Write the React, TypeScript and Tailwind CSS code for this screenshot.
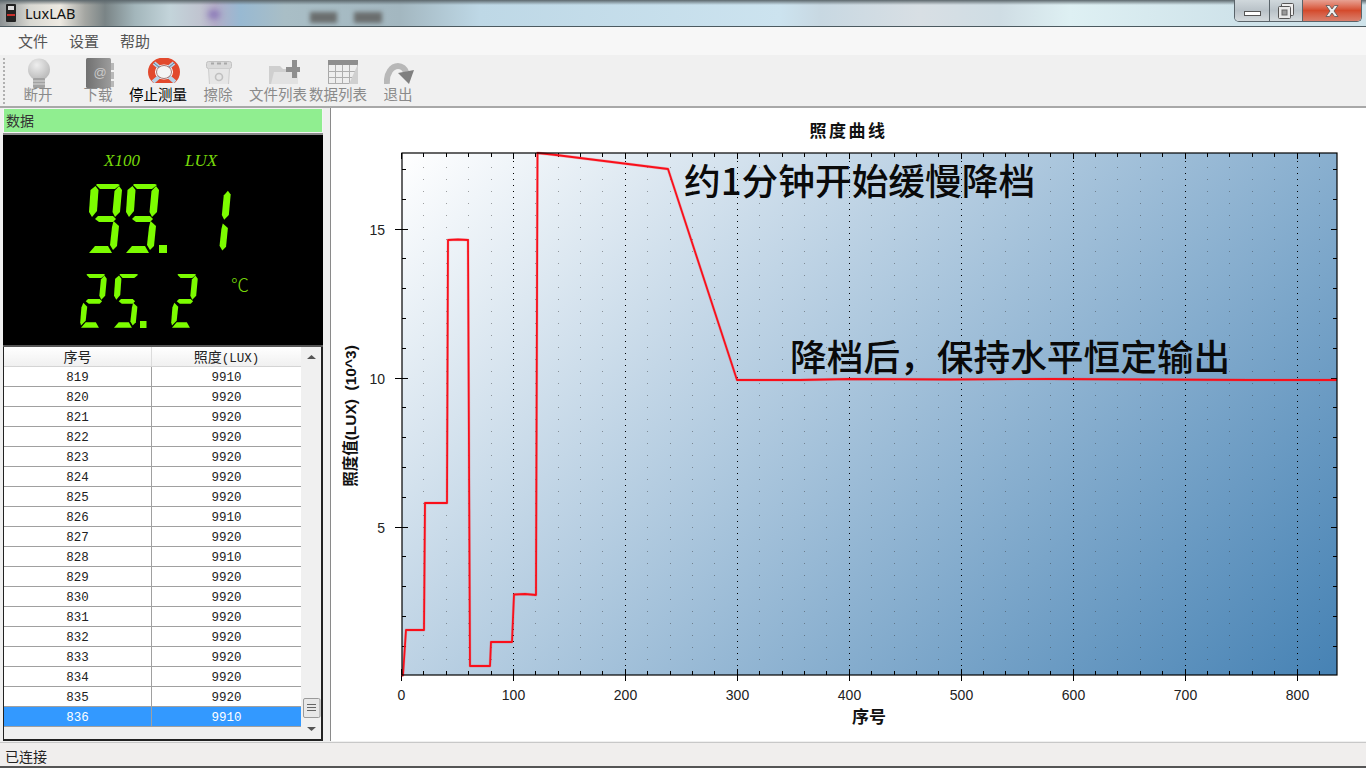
const cjk = "font-['Noto_Sans_CJK_SC','Noto_Sans',sans-serif]"

const menus = ["文件", "设置", "帮助"]

const rows = [
  [819, 9910], [820, 9920], [821, 9920], [822, 9920], [823, 9920], [824, 9920],
  [825, 9920], [826, 9910], [827, 9920], [828, 9910], [829, 9920], [830, 9920],
  [831, 9920], [832, 9920], [833, 9920], [834, 9920], [835, 9920], [836, 9910],
]

// seven segment parts, local coords of a 32x69 digit
const segments: Record<string, string> = {
  a: "8,0 29,0 31,1 26,5 11,5 7,1",
  b: "30,2 33,6 31,28 26,33 23.5,28 25.5,7",
  c: "24.5,37 30,42 28,62 24,66 21,61 23,43",
  d: "6,62 19,62 23,69 0,69",
  e: "3,37 8,42 6,60 0,66 -1,62 0.5,43",
  f: "6.5,2 9.5,6 8,27 3,33 0,28 1.5,6",
  g: "9,32 24,32 27,35 24,38 10,38 6,35",
}

const digitMap: Record<string, string> = {
  "1": "bc",
  "2": "abged",
  "5": "afgcd",
  "9": "abcdfg",
}

function Digit({ ch, x, y, s = 1 }: { ch: string; x: number; y: number; s?: number }) {
  return (
    <g transform={`translate(${x} ${y}) scale(${s})`} fill="#7cfc00">
      {digitMap[ch].split("").map((k) => (
        <polygon key={k} points={segments[k]} />
      ))}
    </g>
  )
}

function LcdPanel() {
  return (
    <div className="h-[210px] bg-black">
      <svg viewBox="3 135 320 210" aria-label="99.1 25.2" className="block h-[210px] w-[320px]">
        <text x="104" y="166" fill="#76d80a" fontSize="17" fontStyle="italic" fontFamily="Liberation Serif, serif">X100</text>
        <text x="185" y="166" fill="#76d80a" fontSize="17" fontStyle="italic" fontFamily="Liberation Serif, serif">LUX</text>
        <Digit ch="9" x={89} y={184} />
        <Digit ch="9" x={126} y={184} />
        <rect x="159" y="245" width="8" height="8" fill="#7cfc00" />
        <Digit ch="1" x={200} y={189} s={0.93} />
        <Digit ch="2" x={81} y={274} s={0.78} />
        <Digit ch="5" x={114} y={274} s={0.78} />
        <rect x="140" y="321" width="6.5" height="7" fill="#7cfc00" />
        <Digit ch="2" x={172} y={274} s={0.78} />
        <text x="231" y="292" fill="#76d80a" fontSize="18" fontWeight="300" fontFamily="Noto Sans CJK SC, serif">℃</text>
      </svg>
    </div>
  )
}

function DataTable() {
  return (
    <div className="flex h-[394px] border-r-2 border-b-2 border-l border-[#222] bg-[#f0f0f0]">
      <div className="flex w-[297px] flex-col">
        <div className={`flex h-[20px] border-b border-[#d4d4d4] bg-gradient-to-b from-white to-[#f0f0f0] text-[14px] leading-[19px] text-[#222] ${cjk}`}>
          <div className="w-[148px] border-r border-[#dcdcdc] text-center">序号</div>
          <div className="flex-1 text-center">
            照度<span className="font-['Liberation_Mono',monospace] text-[12.5px]">(LUX)</span>
          </div>
        </div>
        {rows.map(([n, v], i) => {
          const selected = i === rows.length - 1
          return (
            <div
              key={n}
              className={`flex h-[20px] border-b border-[#a0a0a0] font-['Liberation_Mono',monospace] text-[12.5px] leading-[23px] ${
                selected ? "bg-[#3399ff] text-white" : "bg-white text-[#222]"
              }`}
            >
              <div className="w-[148px] border-r border-[#a0a0a0] text-center">{n}</div>
              <div className="flex-1 text-center">{v}</div>
            </div>
          )
        })}
      </div>
      <div className="ml-[1px] flex-1 bg-[#f0f0f0]">
        <svg viewBox="0 0 19 392" className="block h-[392px] w-[19px]">
          <polygon points="5,12 9.500,8 14,12" fill="#555" />
          <rect x="1.500" y="351.500" width="16.500" height="19" rx="1.500" fill="#e8e8e8" stroke="#9a9a9a" />
          <path d="M5 357.500h9M5 360.500h9M5 363.500h9" stroke="#666" />
          <polygon points="5,380 14,380 9.500,384" fill="#555" />
        </svg>
      </div>
    </div>
  )
}

const curve: [number, number][] = [
  [402, 676], [403, 675], [406, 630], [424, 630], [425, 503], [447, 503], [448, 240], [458, 239.5], [468, 240],
  [470, 666], [490, 666], [491, 642], [512, 642], [514, 594.5], [525, 594], [536, 595], [537.5, 153],
  [552, 154.5], [668, 169], [737, 380], [800, 380], [850, 379], [950, 379.5], [1050, 379], [1150, 379.5],
  [1250, 380], [1337, 380],
]

const x100 = [0, 100, 200, 300, 400, 500, 600, 700, 800]

function Chart() {
  const px = (v: number) => Math.round(401 + v * 1.1194) + 0.5
  const minorX: number[] = []
  for (let v = 20; v <= 820; v += 20) if (v % 100 !== 0) minorX.push(v)
  const py = (v: number) => Math.round(675.5 - v * 29.8) + 0.5
  const minorY: number[] = []
  for (let v = 1; v <= 17; v++) if (v % 5 !== 0) minorY.push(v)
  const pts = curve.map((p) => p.join(",")).join(" ")

  return (
    <svg viewBox="331 146 1034 595" className="block h-[595px] w-[1034px]">
      <defs>
        <linearGradient id="plotBg" gradientUnits="userSpaceOnUse" x1="402" y1="153" x2="1130.5" y2="881.5">
          <stop offset="0" stopColor="#ffffff" />
          <stop offset="1" stopColor="#4682b4" />
        </linearGradient>
      </defs>
      <rect x="402" y="153" width="935" height="522" fill="url(#plotBg)" />

      {/* grid */}
      {minorX.map((v) => (
        <line key={v} x1={px(v)} x2={px(v)} y1="155" y2="675" stroke="#333" strokeOpacity="0.45" strokeDasharray="1 11" />
      ))}
      {x100.slice(1).map((v) => (
        <line key={v} x1={px(v)} x2={px(v)} y1="155" y2="675" stroke="#000" strokeDasharray="1 5" />
      ))}

      {/* ticks */}
      {minorX.map((v) => (
        <g key={v} stroke="#000">
          <line x1={px(v)} x2={px(v)} y1="671" y2="675" />
          <line x1={px(v)} x2={px(v)} y1="153" y2="157" />
        </g>
      ))}
      {minorY.map((v) => (
        <g key={v} stroke="#000">
          <line x1="402" x2="406" y1={py(v)} y2={py(v)} />
          <line x1="1333" x2="1337" y1={py(v)} y2={py(v)} />
        </g>
      ))}
      {x100.map((v) => (
        <g key={v} stroke="#000">
          <line x1={px(v)} x2={px(v)} y1="669" y2="681" />
          <line x1={px(v)} x2={px(v)} y1="153" y2="159" />
        </g>
      ))}
      {[5, 10, 15].map((v) => (
        <g key={v} stroke="#000">
          <line x1="395" x2="408" y1={py(v)} y2={py(v)} />
          <line x1="1331" x2="1337" y1={py(v)} y2={py(v)} />
        </g>
      ))}

      <polyline points={pts} fill="none" stroke="#e8404a" strokeOpacity="0.3" strokeWidth="2.8" strokeLinejoin="round" />
      <polyline points={pts} fill="none" stroke="#fa0f1a" strokeWidth="1.8" strokeLinejoin="round" />
      <rect x="402" y="153" width="935" height="522" fill="none" stroke="#000" strokeWidth="1.2" />

      {/* axis labels */}
      <g fontFamily="Liberation Sans, sans-serif" fontSize="14" fill="#222">
        {x100.map((v) => (
          <text key={v} x={px(v)} y="700" textAnchor="middle">{v}</text>
        ))}
        {[5, 10, 15].map((v) => (
          <text key={v} x="385" y={py(v) + 5} textAnchor="end">{v}</text>
        ))}
      </g>
      <text x="869" y="723" textAnchor="middle" fontSize="17" fontWeight="700" fill="#111" fontFamily="Noto Sans CJK SC, sans-serif">序号</text>
      <text
        transform="translate(356 416) rotate(-90)"
        textAnchor="middle"
        fontSize="15.5"
        fontWeight="700"
        fill="#111"
        fontFamily="Liberation Sans, Noto Sans CJK SC, sans-serif"
        xmlSpace="preserve"
      >
        照度值(LUX)  (10^3)
      </text>

      {/* notes typed onto the picture */}
      <g fontFamily="Noto Sans CJK SC, sans-serif" fontSize="36.7" fontWeight="500" fill="#0a0a0a">
        <text x="684" y="195">约1分钟开始缓慢降档</text>
        <text x="790" y="371">降档后，保持水平恒定输出</text>
      </g>
    </svg>
  )
}

function Bulb() {
  return (
    <svg viewBox="0 0 28 31" className="h-[31px] w-[28px] shrink-0">
      <defs>
        <radialGradient id="bulb" cx="0.4" cy="0.3" r="0.8">
          <stop offset="0" stopColor="#eeeeee" />
          <stop offset="1" stopColor="#b2b2b2" />
        </radialGradient>
      </defs>
      <circle cx="14" cy="11.5" r="11" fill="url(#bulb)" />
      <rect x="8" y="20" width="12" height="10" rx="1" fill="#a2a2a2" />
      <path d="M8 23h12M8 26h12" stroke="#d8d8d8" />
    </svg>
  )
}

function Book() {
  return (
    <svg viewBox="0 0 30 30" className="h-[30px] w-[30px] shrink-0">
      <defs>
        <linearGradient id="book" x1="0" x2="1" y1="0" y2="0">
          <stop offset="0" stopColor="#707070" />
          <stop offset="1" stopColor="#9c9c9c" />
        </linearGradient>
      </defs>
      <rect x="1" y="0" width="25" height="30" rx="1.500" fill="url(#book)" />
      <rect x="26" y="5" width="3" height="7" fill="#b8b8b8" />
      <rect x="26" y="14" width="3" height="7" fill="#b8b8b8" />
      <rect x="26" y="23" width="3" height="6" fill="#b8b8b8" />
      <text x="15" y="19" textAnchor="middle" fontSize="13" fill="#c8c8c8" fontFamily="Liberation Sans, sans-serif">@</text>
    </svg>
  )
}

function Buoy() {
  return (
    <svg viewBox="0 0 32 25" className="h-[25px] w-[32px] shrink-0">
      <ellipse cx="16" cy="14" rx="12.500" ry="11" fill="#ffffff" stroke="#e2492d" strokeWidth="7" />
      <path d="M6 5l6 5M26 5l-6 5M5 24l7-6M27 24l-7-6" stroke="#b9d3e6" strokeWidth="4" />
      <path d="M6 5l6 5M26 5l-6 5" stroke="#5a7ea0" strokeWidth="1" />
      <ellipse cx="16" cy="14" rx="7.500" ry="6.500" fill="#f4f4f4" stroke="#7f3a30" strokeWidth="0.7" />
    </svg>
  )
}

function Bin() {
  return (
    <svg viewBox="0 0 28 24" className="h-[24px] w-[28px] shrink-0">
      <rect x="1.500" y="1.500" width="25" height="7" rx="2" fill="#dadada" stroke="#c2c2c2" />
      <path d="M3.500 8.500h21l-1 16h-19z" fill="#e6e6e6" stroke="#cdcdcd" />
      <path d="M6 3.500h3M12 3.500h4M19 3.500h3" stroke="#a8a8a8" strokeWidth="2" />
      <circle cx="14" cy="17" r="3.500" fill="none" stroke="#c0c0c0" strokeWidth="1.600" />
    </svg>
  )
}

function FolderAdd() {
  return (
    <svg viewBox="0 0 32 24" className="h-[24px] w-[32px] shrink-0">
      <path d="M1 24V6h11l3 3h15v15z" fill="#cfcfcf" />
      <path d="M3 24l3-12h24v12z" fill="#e2e2e2" />
      <path d="M18 7h6V0h5v7h3v5h-3v6h-5v-6h-6z" fill="#8e8e8e" />
    </svg>
  )
}

function TableIcon() {
  return (
    <svg viewBox="0 0 30 24" className="h-[24px] w-[30px] shrink-0">
      <rect x="0.500" y="0.500" width="29" height="24" fill="#eeeeee" stroke="#a8a8a8" />
      <rect x="0" y="0" width="30" height="5" fill="#8e8e8e" />
      <path d="M0 11.500h30M0 17.500h30M0 23.500h24M7.500 5v19M14.500 5v19M21.500 5v19" stroke="#aeaeae" />
      <path d="M21 24l9-20v20z" fill="#d0d0d0" />
    </svg>
  )
}

function RedoIcon() {
  return (
    <svg viewBox="0 0 30 21" className="h-[21px] w-[30px] shrink-0">
      <path d="M3 21C2 10 8 3 14 3c4 0 7 3 8 6" fill="none" stroke="#b8b8b8" strokeWidth="6" />
      <polygon points="14,10 30,7 25,21" fill="#808080" />
    </svg>
  )
}

const tools = [
  { label: "断开", pos: "pl-[2px] pt-[3px]", icon: <Bulb /> },
  { label: "下载", pos: "pl-[4px] pt-[3px]", icon: <Book /> },
  { label: "停止测量", pos: "pl-[12px] pt-[3px]", icon: <Buoy />, active: true },
  { label: "擦除", pos: "pl-[2px] pt-[5px]", icon: <Bin /> },
  { label: "文件列表", pos: "pl-[12px] pt-[5px]", icon: <FolderAdd /> },
  { label: "数据列表", pos: "pl-[10px] pt-[5px]", icon: <TableIcon /> },
  { label: "退出", pos: "pl-[2px] pt-[8px]", icon: <RedoIcon /> },
]

function Toolbar() {
  return (
    <div className="flex h-[51px] items-start bg-[#f0f0f0]">
      <div className="mt-[3px] ml-[3px] h-[46px] w-[5px] border-l-2 border-dotted border-[#b0b0b0]" />
      {tools.map((t) => (
        <div key={t.label} className="flex h-[48px] w-[60px] flex-col items-center">
          <div className={`flex h-[28px] items-start ${t.pos}`}>{t.icon}</div>
          <div className={`relative mt-[2px] whitespace-nowrap text-[14.5px] leading-[18px] ${t.active ? "text-black" : "text-[#8a8a8a]"}`}>
            {t.label}
          </div>
        </div>
      ))}
    </div>
  )
}

function TitleBar() {
  return (
    <div className="relative flex h-[27px] items-start overflow-hidden border-b border-[#4c5a60] bg-[linear-gradient(90deg,#8b9092_0px,#d8d8d2_30px,#eeeae2_60px,#a4a6a2_85px,#7a8486_105px,#a3b6bb_135px,#c3d4da_170px,#c0c4d0_200px,#b4aec8_215px,#98b9d2_240px,#a9bec6_285px,#a3b7c0_400px,#bed8e6_480px,#cce3ef_780px,#c8d8e2_820px,#d8dfe4_920px,#cfdde4_1000px,#def0f3_1070px,#cfe3ea_1235px,#cfe3ea_100%)]">
      <div className="absolute inset-x-0 top-0 h-[5px] bg-gradient-to-b from-[#5c676c] to-transparent" />
      <div className="absolute top-[12px] left-[310px] h-[11px] w-[27px] bg-[#6a6e6e] blur-[2px]" />
      <div className="absolute top-[12px] left-[354px] h-[11px] w-[28px] bg-[#6a6e6e] blur-[2px]" />
      <div className="absolute top-[10px] left-[208px] h-[9px] w-[12px] rounded-full bg-[#8a78b8] blur-[3px]" />
      <svg viewBox="0 0 10 18" className="relative mt-[4px] ml-[6px] h-[18px] w-[10px]">
        <rect x="0" y="0" width="10" height="18" rx="1" fill="#222" />
        <rect x="2" y="2" width="6" height="4" fill="#ddd" />
        <rect x="1" y="10" width="8" height="2" fill="#c9302c" />
      </svg>
      <div className="relative mt-[4px] ml-[9px] font-['Noto_Sans',sans-serif] text-[14.5px] leading-[19px] text-[#111]">LuxLAB</div>
      <div className="relative mr-[4px] ml-auto flex h-[22px] overflow-hidden rounded-b-[5px] border border-t-0 border-[#5a646a]">
        <div className="flex w-[35px] items-end justify-center border-r border-[#5a646a] bg-gradient-to-b from-[#d0d8dc] via-[#b9c2c8] to-[#d4dadd] pb-[5px]">
          <div className="h-[5px] w-[17px] border border-[#555] bg-white" />
        </div>
        <div className="flex w-[33px] items-center justify-center border-r border-[#5a646a] bg-gradient-to-b from-[#d0d8dc] via-[#b9c2c8] to-[#d4dadd]">
          <svg viewBox="0 0 18 18" className="h-[18px] w-[18px]">
            <rect x="4.500" y="1.500" width="12" height="12" rx="1" fill="#eee" stroke="#555" />
            <rect x="1.500" y="4.500" width="12" height="12" rx="1" fill="#e8e8e8" stroke="#555" />
            <rect x="5" y="8" width="5" height="5" fill="#999" stroke="#666" />
          </svg>
        </div>
        <div className="flex w-[58px] items-center justify-center bg-gradient-to-b from-[#e7a193] via-[#d44a2c] to-[#d97f6c]">
          <svg viewBox="0 0 16 14" className="h-[14px] w-[16px]">
            <path d="M2 1.500h3.500L8 5l2.500-3.500H14L10 7l4 5.500h-3.500L8 9l-2.500 3.500H2L6 7z" fill="#eee" stroke="#555" strokeWidth="0.8" />
          </svg>
        </div>
      </div>
    </div>
  )
}

export default function App() {
  return (
    <div className={`flex h-[768px] w-[1366px] flex-col overflow-hidden bg-[#f0f0f0] ${cjk}`}>
      <TitleBar />
      <div className="flex h-[28px] items-center gap-[21px] bg-[#f7f7f7] pl-[18px] text-[15px] text-[#555]">
        {menus.map((m) => (
          <span key={m}>{m}</span>
        ))}
      </div>
      <Toolbar />

      <div className="flex h-[636px] border-t-2 border-[#a8a8a8]">
        {/* left side */}
        <div className="ml-[3px] flex w-[320px] flex-col">
          <div className="h-[25px] border border-[#f4f4f4] bg-[#90ee90] pl-[2px] text-[14px] leading-[22px] text-[#333]">数据</div>
          <div className="h-[2px] bg-[#8c8c8c]" />
          <LcdPanel />
          <div className="h-[2px] bg-[#555]" />
          <DataTable />
        </div>

        {/* chart */}
        <div className="mb-[1px] ml-[7px] flex-1 border-l border-[#8a8a8a] bg-white">
          <div className="h-[38px] pt-[11px] text-center text-[17px] leading-[22px] font-bold tracking-[2.5px] text-[#111]">照度曲线</div>
          <Chart />
        </div>
      </div>

      <div className="h-[24px] border-t border-[#c8c8c8] bg-[#f0eeed] pl-[5px] text-[14px] leading-[27px] text-[#222]">已连接</div>
      <div className="h-[2px] flex-1 bg-[#555]" />
    </div>
  )
}
